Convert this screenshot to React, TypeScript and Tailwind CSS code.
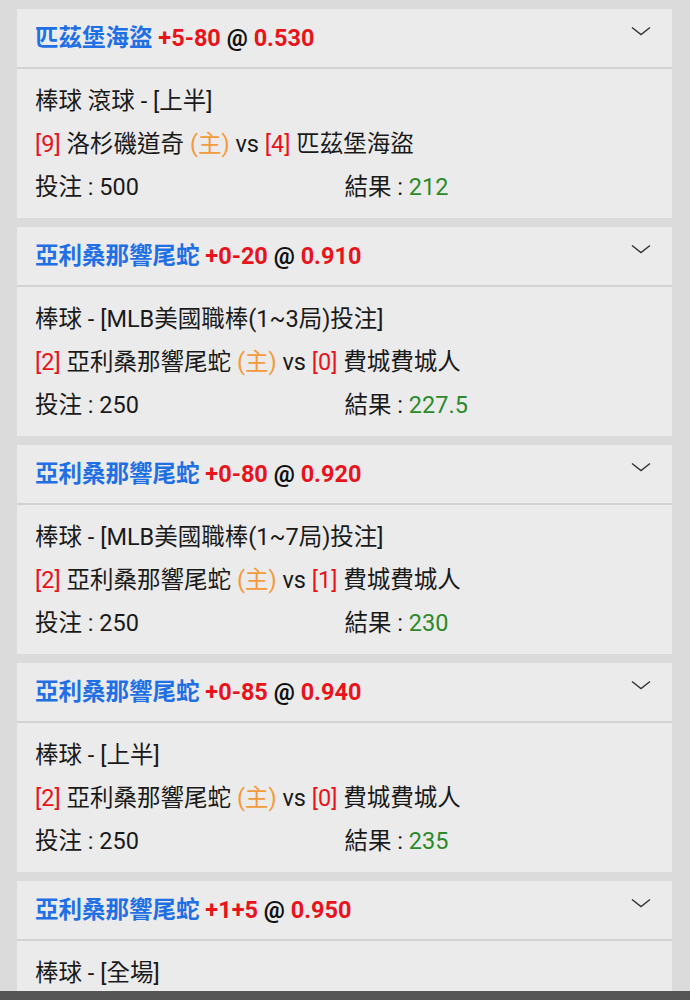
import React from "react"

interface Bet {
  team: string
  line: string
  odds: string
  league: string
  home: string
  homeScore: string
  away: string
  awayScore: string
  stake: string
  result: string
}

const bets: Bet[] = [
  { team: "匹茲堡海盜", line: "+5-80", odds: "0.530", league: "棒球 滾球 - [上半]", home: "洛杉磯道奇", homeScore: "9", away: "匹茲堡海盜", awayScore: "4", stake: "500", result: "212" },
  { team: "亞利桑那響尾蛇", line: "+0-20", odds: "0.910", league: "棒球 - [MLB美國職棒(1~3局)投注]", home: "亞利桑那響尾蛇", homeScore: "2", away: "費城費城人", awayScore: "0", stake: "250", result: "227.5" },
  { team: "亞利桑那響尾蛇", line: "+0-80", odds: "0.920", league: "棒球 - [MLB美國職棒(1~7局)投注]", home: "亞利桑那響尾蛇", homeScore: "2", away: "費城費城人", awayScore: "1", stake: "250", result: "230" },
  { team: "亞利桑那響尾蛇", line: "+0-85", odds: "0.940", league: "棒球 - [上半]", home: "亞利桑那響尾蛇", homeScore: "2", away: "費城費城人", awayScore: "0", stake: "250", result: "235" },
  { team: "亞利桑那響尾蛇", line: "+1+5", odds: "0.950", league: "棒球 - [全場]", home: "亞利桑那響尾蛇", homeScore: "2", away: "費城費城人", awayScore: "0", stake: "250", result: "235" },
]

const Chevron = () => (
  <svg width="20" height="10" viewBox="0 0 20 10" fill="none" className="shrink-0">
    <path d="M1 1.5 L10 8.5 L19 1.5" stroke="#333" strokeWidth="1.4" />
  </svg>
)

const BetCard: React.FC<{ bet: Bet }> = ({ bet }) => (
  <div className="bg-[#ebebeb]">
    <div className="flex h-[60px] items-center justify-between border-b-2 border-[#d3d3d3] pl-[18px] pr-[21px]">
      <div className="pt-[2px] text-[23.5px] font-bold">
        <span className="text-[#1f6fe5]">{bet.team}</span>{" "}
        <span className="text-[#e8131b]">{bet.line}</span>{" "}
        <span className="text-[#111]">@</span>{" "}
        <span className="text-[#e8131b]">{bet.odds}</span>
      </div>
      <div className="-mt-[14px]">
        <Chevron />
      </div>
    </div>
    <div className="px-[18px] pt-[11px] pb-[9px] text-[23.5px] leading-[43px] text-[#1a1a1a]">
      <div>{bet.league}</div>
      <div>
        <span className="text-[#e8131b]">[{bet.homeScore}]</span> {bet.home}{" "}
        <span className="text-[#f39a3a]">(主)</span> vs{" "}
        <span className="text-[#e8131b]">[{bet.awayScore}]</span> {bet.away}
      </div>
      <div className="grid grid-cols-2">
        <div>投注 : {bet.stake}</div>
        <div>
          結果 : <span className="text-[#2b8a2b]">{bet.result}</span>
        </div>
      </div>
    </div>
  </div>
)

export default function App() {
  return (
    <div
      className="relative h-[1000px] overflow-hidden bg-[#dbdbdb]"
      style={{ fontFamily: "Roboto, 'Noto Sans CJK TC', sans-serif" }}
    >
      <div className="flex flex-col gap-[9px] px-[17px] pt-[9px] pr-[18px]">
        {bets.map((b, i) => (
          <BetCard key={i} bet={b} />
        ))}
      </div>
      <div className="absolute bottom-0 left-0 right-0 h-[9px] bg-[#555555]" />
    </div>
  )
}
